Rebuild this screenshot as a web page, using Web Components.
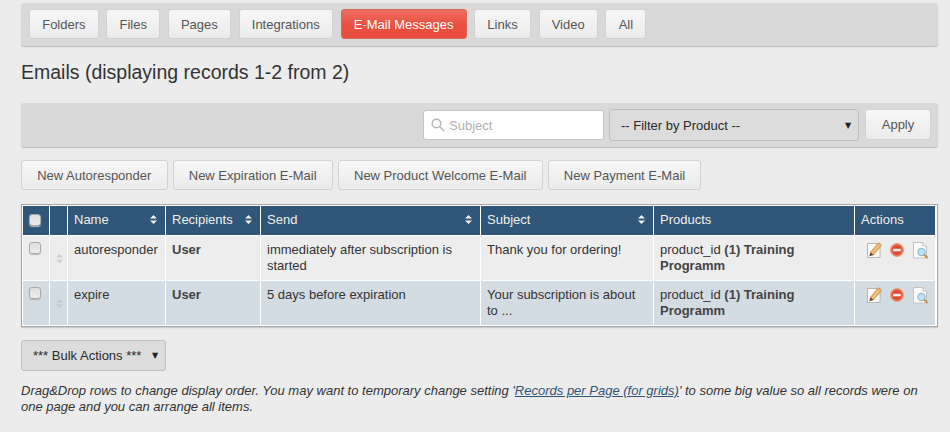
<!DOCTYPE html>
<html>
<head>
<meta charset="utf-8">
<title>Emails</title>
<style>
html, body { margin: 0; padding: 0; background: #ececec; }
body { font: 13px "Liberation Sans", Arial, sans-serif; color: #333; overflow: hidden; }
</style>
</head>
<body>
<email-page></email-page>
<script>
class UiButton extends HTMLElement {
    constructor() {
        super();
        this.attachShadow({ mode: 'open' }).innerHTML = `
            <style>
                :host {
                    display: inline-flex; align-items: center; justify-content: center; box-sizing: border-box;
                    height: 31px; padding: 0 12px; border: 1px solid #d2d2d2; border-radius: 3px;
                    background: linear-gradient(#f7f7f7, #ebebeb); color: #555; font-size: 13px; white-space: nowrap;
                }
                :host([active]) {
                    background: linear-gradient(#ee6f62, #e84f3f 55%); border-color: #d9685c; color: #fff;
                }
            </style>
            <slot></slot>`;
    }
}
customElements.define('ui-button', UiButton);

class UiBar extends HTMLElement {
    constructor() {
        super();
        this.attachShadow({ mode: 'open' }).innerHTML = `
            <style>
                :host {
                    display: flex; box-sizing: border-box; background: #d9d9d9; border-radius: 3px;
                    box-shadow: 0 1px 1px #bdbdbd;
                }
            </style>
            <slot></slot>`;
    }
}
customElements.define('ui-bar', UiBar);

class UiSelect extends HTMLElement {
    constructor() {
        super();
        this.attachShadow({ mode: 'open' }).innerHTML = `
            <style>
                :host {
                    display: flex; align-items: center; justify-content: space-between; box-sizing: border-box;
                    height: 32px; padding: 0 3px 0 11px; background: #dcdcdc; border: 1px solid #bfbfbf;
                    border-radius: 3px; color: #2b2b2b; font-size: 13px;
                }
                i { font: normal 8px "DejaVu Sans", sans-serif; color: #222; width: 10px; }
            </style>
            <slot></slot><i>▼</i>`;
    }
}
customElements.define('ui-select', UiSelect);

class SearchBox extends HTMLElement {
    constructor() {
        super();
        this.attachShadow({ mode: 'open' }).innerHTML = `
            <style>
                :host {
                    display: flex; align-items: center; gap: 4px; box-sizing: border-box; width: 181px; height: 31px;
                    padding-left: 7px; background: #fff; border: 1px solid #c4c4c4; border-radius: 3px;
                    color: #b0b0b0; font-size: 13px;
                }
                svg { width: 14px; height: 14px; }
            </style>
            <svg viewBox="0 0 14 14" fill="none" stroke="#b5b5b5" stroke-width="1.4">
                <circle cx="5.5" cy="5.5" r="4.3"/><path d="M8.7 8.7l4.4 4.4"/>
            </svg>
            <slot></slot>`;
    }
}
customElements.define('search-box', SearchBox);

class UiCheck extends HTMLElement {
    constructor() {
        super();
        this.attachShadow({ mode: 'open' }).innerHTML = `
            <style>
                :host {
                    display: block; box-sizing: border-box; width: 12px; height: 12px; background: linear-gradient(#dedede, #ececec);
                    border: 1px solid #a9a9a9; border-radius: 3px; box-shadow: 0 1px 1px #b5b5b5;
                }
            </style>`;
    }
}
customElements.define('ui-check', UiCheck);

class SortIcon extends HTMLElement {
    constructor() {
        super();
        this.attachShadow({ mode: 'open' }).innerHTML = `
            <style>
                :host { display: block; width: 7px; height: 9px; }
                svg { display: block; }
            </style>
            <svg width="7" height="9" viewBox="0 0 7 9" fill="currentColor"><path d="M3.5 0L7 3.6H0zM3.5 9L0 5.4h7z"/></svg>`;
    }
}
customElements.define('sort-icon', SortIcon);

class GridRow extends HTMLElement {
    constructor() {
        super();
        this.attachShadow({ mode: 'open' }).innerHTML = `
            <style>
                :host {
                    display: grid; grid-template-columns: 26px 17px 97px 94px 219px 172px 200px 80px;
                    column-gap: 1px; height: 44px; background: #fff; color: #333;
                    --cell: #ededed; --drag: #cfcfcf;
                }
                :host([alt]) { --cell: #d3dbe3; --drag: #c3ccd4; }
                :host([head]) {
                    height: 29px; color: #f0f0ea;
                    --cell: repeating-conic-gradient(#2c5275 0 25%, #33597c 0 50%) 0 0 / 2px 2px;
                }
            </style>
            <slot></slot>`;
    }
}
customElements.define('grid-row', GridRow);

class GridCell extends HTMLElement {
    constructor() {
        super();
        this.attachShadow({ mode: 'open' }).innerHTML = `
            <style>
                :host {
                    display: block; box-sizing: border-box; padding: 6px 6px 0 6px;
                    background: var(--cell); line-height: 16px; font-size: 13px; min-width: 0;
                }
                :host([sort]) { display: flex; justify-content: space-between; align-items: center; padding: 0 8px 2px 6px; }
                :host([head]) { padding: 0 0 2px 6px; display: flex; align-items: center; }
                :host([drag]) { padding: 18px 0 0 6px; color: var(--drag); }
                :host([tools]) { padding: 6px 0 0 12px; }
                ::slotted(b) { color: #444; }
            </style>
            <slot></slot>`;
    }
}
customElements.define('grid-cell', GridCell);

class EmailGrid extends HTMLElement {
    constructor() {
        super();
        this.attachShadow({ mode: 'open' }).innerHTML = `
            <style>
                :host {
                    display: flex; flex-direction: column; gap: 1px; box-sizing: border-box; width: 917px;
                    border: 1px solid #a8a8a8; padding: 1px; background: #fff; box-shadow: 0 1px 1px #ccc;
                }
            </style>
            <slot></slot>`;
    }
}
customElements.define('email-grid', EmailGrid);

class RowTools extends HTMLElement {
    constructor() {
        super();
        this.attachShadow({ mode: 'open' }).innerHTML = `
            <style>
                :host { display: flex; align-items: flex-start; }
                svg { display: block; flex: none; }
            </style>
            <svg width="15" height="16" viewBox="0 0 15 16" style="margin-right:8px">
                <path d="M.5 1.5h12.5v14H.5z" fill="#fbfbfb" stroke="#b5b5b5"/>
                <path d="M3.4 10.2L10.6 1.6c.6-.7 1.3-.8 2.2-.2l1 .9c.7.7.6 1.3.1 2L6.600 13z" fill="#e6ad62" stroke="#c8904a" stroke-width=".6"/>
                <path d="M5 11.500l7-8.300" stroke="#f6d49a" stroke-width="1.1"/>
                <path d="M2.400 14.200l1-4 3.200 2.800z" fill="#6e3d20"/>
            </svg>
            <svg width="14" height="15" viewBox="0 0 14 15" style="margin:1px 9px 0 0">
                <circle cx="7" cy="7" r="6.5" fill="#ee7058" stroke="#dfa877" stroke-width="1"/>
                <circle cx="7" cy="7" r="4.800" fill="#de4a38"/>
                <path d="M3.200 5.800h7.600v2.500H3.200z" fill="#fbeeea"/>
            </svg>
            <svg width="16" height="17" viewBox="0 0 16 17">
                <path d="M.5.500h9.500l3.500 3.500v12H.5z" fill="#fbfbfb" stroke="#c3c3c3"/>
                <path d="M10 .500v3.500h3.500" fill="#ececec" stroke="#c3c3c3"/>
                <circle cx="8.500" cy="10" r="3.600" fill="#c3e2f0" stroke="#8fbdd3" stroke-width="1.300"/>
                <path d="M11.300 12.800l3.200 3.200" stroke="#c5893f" stroke-width="2"/>
            </svg>`;
    }
}
customElements.define('row-tools', RowTools);

class EmailPage extends HTMLElement {
    constructor() {
        super();
        const row = (alt, name, send, subject) => `
            <grid-row ${alt ? 'alt' : ''}>
                <grid-cell><ui-check></ui-check></grid-cell>
                <grid-cell drag><sort-icon></sort-icon></grid-cell>
                <grid-cell>${name}</grid-cell>
                <grid-cell><b>User</b></grid-cell>
                <grid-cell>${send}</grid-cell>
                <grid-cell>${subject}</grid-cell>
                <grid-cell>product_id <b>(1) Training Programm</b></grid-cell>
                <grid-cell tools><row-tools></row-tools></grid-cell>
            </grid-row>`;
        this.attachShadow({ mode: 'open' }).innerHTML = `
            <style>
                :host { display: block; width: 917px; margin-left: 21px; padding-top: 3px; }
                .tabs { height: 43px; padding: 6px 8px 0; gap: 7.6px; align-items: flex-start; }
                .tabs ui-button { height: 30px; padding: 0 12.2px; }
                h1 { margin: 13px 0 0; height: 26px; font: normal 19.5px/26px "Liberation Sans", Arial, sans-serif; color: #333; }
                .filter { height: 44px; margin-top: 18px; padding: 6px 6px 0 402px; gap: 5px; align-items: flex-start; }
                .filter search-box { margin-top: 1px; height: 30px; }
                .filter ui-select { width: 250px; }
                .filter ui-button { width: 66px; margin-left: 1px; height: 31px; }
                .new { display: flex; gap: 5px; margin-top: 13px; }
                .new ui-button { height: 30px; padding: 0 15.2px; }
                email-grid { margin-top: 14px; }
                .bulk { width: 145px; height: 31px; margin-top: 13px; }
                p { margin: 12px 0 0; font: italic 13px/16px "Liberation Sans", Arial, sans-serif; color: #333; width: 917px; }
                a { color: #2f5577; }
            </style>
            <ui-bar class="tabs">
                <ui-button>Folders</ui-button><ui-button>Files</ui-button><ui-button>Pages</ui-button><ui-button>Integrations</ui-button><ui-button active>E-Mail Messages</ui-button><ui-button>Links</ui-button><ui-button>Video</ui-button><ui-button>All</ui-button>
            </ui-bar>
            <h1>Emails (displaying records 1-2 from 2)</h1>
            <ui-bar class="filter">
                <search-box>Subject</search-box>
                <ui-select>-- Filter by Product --</ui-select>
                <ui-button>Apply</ui-button>
            </ui-bar>
            <div class="new">
                <ui-button>New Autoresponder</ui-button><ui-button>New Expiration E-Mail</ui-button><ui-button>New Product Welcome E-Mail</ui-button><ui-button>New Payment E-Mail</ui-button>
            </div>
            <email-grid>
                <grid-row head>
                    <grid-cell head><ui-check></ui-check></grid-cell>
                    <grid-cell head></grid-cell>
                    <grid-cell sort>Name <sort-icon></sort-icon></grid-cell>
                    <grid-cell sort>Recipients <sort-icon></sort-icon></grid-cell>
                    <grid-cell sort>Send <sort-icon></sort-icon></grid-cell>
                    <grid-cell sort>Subject <sort-icon></sort-icon></grid-cell>
                    <grid-cell head>Products</grid-cell>
                    <grid-cell head>Actions</grid-cell>
                </grid-row>
                ${row(false, 'autoresponder', 'immediately after subscription is started', 'Thank you for ordering!')}
                ${row(true, 'expire', '5 days before expiration', 'Your subscription is about to ...')}
            </email-grid>
            <ui-select class="bulk">*** Bulk Actions ***</ui-select>
            <p>Drag&amp;Drop rows to change display order. You may want to temporary change setting '<a href="#">Records per Page (for grids)</a>' to some big value so all records were on one page and you can arrange all items.</p>`;
    }
}
customElements.define('email-page', EmailPage);
</script>
</body>
</html>
